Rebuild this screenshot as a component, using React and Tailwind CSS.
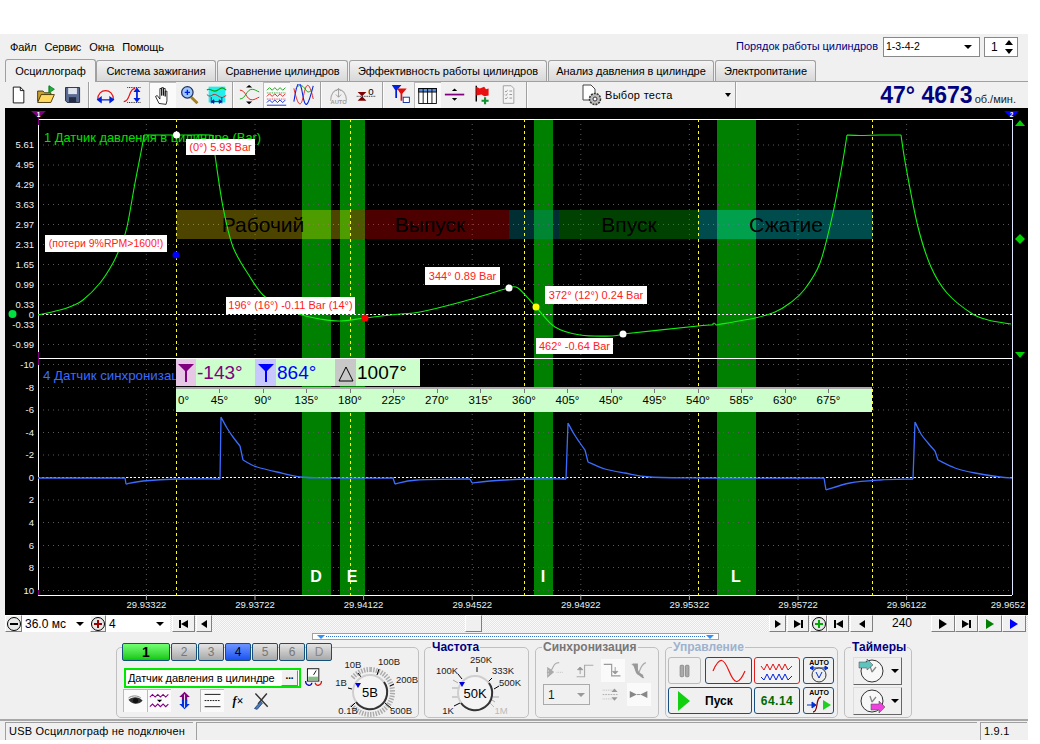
import React from 'react';

const F = { fontFamily: '"Liberation Sans", Arial, sans-serif' };

function smooth(str) {
  return str.split('|').map(seg => {
    const p = seg.trim().split(/\s+/).map(s => s.split(',').map(Number));
    let d = `M${p[0][0]} ${p[0][1]}`;
    for (let i = 0; i < p.length - 1; i++) {
      const a = p[Math.max(0, i - 1)], b = p[i], c = p[i + 1], e = p[Math.min(p.length - 1, i + 2)];
      d += `C${(b[0] + (c[0] - a[0]) / 6).toFixed(1)} ${(b[1] + (c[1] - a[1]) / 6).toFixed(1)} ${(c[0] - (e[0] - b[0]) / 6).toFixed(1)} ${(c[1] - (e[1] - b[1]) / 6).toFixed(1)} ${c[0]} ${c[1]}`;
    }
    return d;
  }).join(' ');
}

const pressure = smooth("38,315 60,310 72,306 83,300 100,283 113,263 121,245 127,227 135,183 142,147 144,135 | 144,135 180,135 210,135 213,137 | 213,137 215,155 223,207 233,247 250,277 263,295 280,306 302,315 320,319 340,321 365,318 400,314 420,312 461,302 508,288 | 508,288 518,288 536,307 555,327 580,335 612,336 623,334 | 623,334 698,326 712,325 | 712,325 714,323 716,325 | 716,325 755,318 775,312 790,303 804,290 820,263 833,213 843,160 847,135 | 847,135 860,135.5 880,135 901,135 | 901,135 906,167 918,227 931,267 947,293 971,313 988,320 1011,324");
const sync = smooth("38,478 125,478 | 125,478 126,484 | 126,484 143,481 177,479 220,479 | 220,479 221,417 | 221,417 227,428 233,437 240,446 | 240,446 243,460 | 243,460 250,464 257,467 277,472 300,477 330,478 393,478 | 393,478 395,484 | 395,484 417,480 470,479 | 470,479 472,483 | 472,483 490,481 530,479 566,479 | 566,479 568,423 | 568,423 574,434 580,443 585,450 | 585,450 588,462 | 588,462 605,469 625,473 650,477 700,478 824,478 | 824,478 826,490 | 826,490 850,483 880,480 913,479 | 913,479 915,422 | 915,422 921,434 928,443 935,451 | 935,451 938,460 | 938,460 955,468 975,473 1000,477 1012,478");
const y1 = [['5.61',144.5],['4.95',164.5],['4.29',184.5],['3.63',204],['2.97',224],['2.31',244],['1.65',264],['0.99',284],['0.33',304],['0',314],['-0.33',324],['-0.99',344]];
const y2 = [['-10',364],['-8',387],['-6',409.5],['-4',432],['-2',454.5],['0',477],['2',499.5],['4',522],['6',545],['8',567],['10',590]];
const xs = [[146.4,'29.93322'],[255,'29.93722'],[363.6,'29.94122'],[472.2,'29.94522'],[580.8,'29.94922'],[689.4,'29.95322'],[798,'29.95722'],[906.6,'29.96122'],[1008,'29.9652']];
const bands = [[302,29,'D',316],[340,25,'E',352],[534,19,'I',543],[717,39,'L',736]];
const degs = [45,90,135,180,225,270,315,360,405,450,495,540,585,630,675];
const tags = [
  ['left-[181px] top-[31px] w-[69px] h-[16px] text-[11px]','(0°) 5.93 Bar'],
  ['left-[40px] top-[127px] w-[122px] h-[17px] text-[10.5px]','(потери 9%RPM>1600!)'],
  ['left-[221px] top-[189px] w-[129px] h-[17px] text-[11px]','196° (16°) -0.11 Bar (14°)'],
  ['left-[420px] top-[159px] w-[75px] h-[18px] text-[11px]','344° 0.89 Bar'],
  ['left-[540px] top-[178px] w-[102px] h-[18px] text-[11px]','372° (12°) 0.24 Bar'],
  ['left-[531px] top-[230px] w-[77px] h-[16px] text-[11px]','462° -0.64 Bar'],
];

function Chart() {
  return (
    <div className="relative ml-[5px] w-[1023px] h-[507px] bg-black overflow-hidden" style={F}>
      <svg width="1023" height="507" viewBox="5 108 1023 507" className="block">
        {bands.map(b => <rect key={b[2]} x={b[0]} y="119" width={b[1]} height="476" fill="#008000" />)}
        {y1.concat(y2).map((t, i) => <line key={i} x1="38" x2="1012" y1={t[1]+0.5} y2={t[1]+0.5} stroke="#5a5a5a" strokeDasharray="1 4" />)}
        {xs.slice(0,8).map(t => <line key={t[1]} x1={t[0]} x2={t[0]} y1="119" y2="595" stroke="#5a5a5a" strokeDasharray="1 4" />)}
        <rect x="176.5" y="210" width="173.5" height="29" fill="#ffe000" fillOpacity=".3" />
        <rect x="350" y="210" width="159" height="29" fill="#ff0000" fillOpacity=".3" />
        <rect x="509" y="210" width="50" height="29" fill="#0090a0" fillOpacity=".32" />
        <rect x="559" y="210" width="139.5" height="29" fill="#00a000" fillOpacity=".4" />
        <rect x="698.5" y="210" width="174" height="29" fill="#00e0e0" fillOpacity=".34" />
        {[176.5,350.5,524.5,698.5,872.5].map(x => <line key={x} x1={x} x2={x} y1="119" y2="595" stroke="#ffff00" strokeDasharray="3 3" />)}
        <line x1="38" x2="1012" y1="314.5" y2="314.5" stroke="#fff" strokeDasharray="2 2" />
        <line x1="38" x2="1012" y1="477.5" y2="477.5" stroke="#fff" strokeDasharray="2 2" />
        <line x1="38" x2="1012" y1="119.5" y2="119.5" stroke="#fff" />
        <line x1="38" x2="1012" y1="358.5" y2="358.5" stroke="#fff" />
        <line x1="38" x2="1012" y1="595.5" y2="595.5" stroke="#fff" />
        <line x1="38.5" x2="38.5" y1="119" y2="595" stroke="#fff" />
        <line x1="1012.5" x2="1012.5" y1="119" y2="595" stroke="#dfe6ff" />
        <line x1="38.5" x2="38.5" y1="116" y2="125" stroke="#800080" />
        <line x1="38.5" x2="38.5" y1="352" y2="365" stroke="#800080" />
        <line x1="38.5" x2="38.5" y1="590" y2="595" stroke="#800080" />
        {xs.slice(0,8).map(t => <line key={t[1]} x1={t[0]} x2={t[0]} y1="595" y2="600" stroke="#aaa" />)}
        <text x="44" y="141.5" fill="#00e000" fontSize="12.9">1 Датчик давления в цилиндре (Bar)</text>
        <text x="43" y="380" fill="#3a6cff" fontSize="13.3">4 Датчик синхронизации</text>
        {[['Рабочий',263],['Выпуск',430],['Впуск',629],['Сжатие',786]].map(t => <text key={t[0]} x={t[1]} y="232" textAnchor="middle" fontSize="21" fill="#000">{t[0]}</text>)}
        <path d={pressure} fill="none" stroke="#10f010" strokeWidth="1.1" />
        <path d={sync} fill="none" stroke="#3a6cff" strokeWidth="1.3" />
        {y1.concat(y2).map((t, i) => <text key={i} x="34" y={t[1]+3.5} textAnchor="end" fontSize="9.5" fill="#f0f0f0">{t[0]}</text>)}
        {xs.map(t => <text key={t[1]} x={t[0]} y="608" textAnchor="middle" fontSize="9.5" fill="#e0f2f4">{t[1]}</text>)}
        {bands.map(b => <text key={b[2]} x={b[3]} y="582" textAnchor="middle" fontSize="16" fontWeight="700" fill="#fff">{b[2]}</text>)}
        <polygon points="31,111 46,111 38.5,118" fill="#800080" />
        <text x="38.5" y="116.5" textAnchor="middle" fontSize="6.5" fontWeight="700" fill="#fff">1</text>
        <polygon points="1004,111 1019,111 1011.5,118" fill="#0000ff" />
        <text x="1011.5" y="116.5" textAnchor="middle" fontSize="6.5" fontWeight="700" fill="#fff">2</text>
        <polygon points="1020,120 1025,126 1015,126" fill="#00d000" />
        <polygon points="1020,234 1025,239 1020,244 1015,239" fill="#00d000" />
        <polygon points="1020,358 1025,352 1015,352" fill="#00d000" />
        <circle cx="176.5" cy="135" r="3.5" fill="#fff" />
        <circle cx="176" cy="255" r="3.5" fill="#0000ff" />
        <circle cx="12.5" cy="314" r="4" fill="#00e040" />
        <circle cx="365" cy="318" r="3.5" fill="#ff0000" />
        <circle cx="509" cy="288" r="3.5" fill="#fff" />
        <circle cx="536" cy="307" r="3.5" fill="#ffff00" />
        <circle cx="623" cy="334" r="3.5" fill="#fff" />
      </svg>
      {tags.map(t => (
        <div key={t[1]} className={"absolute flex items-center justify-center bg-white text-[#ff2020] whitespace-nowrap " + t[0]}>{t[1]}</div>
      ))}
      <div className="absolute left-[171px] top-[251px] flex w-[244px] h-[27px] items-center bg-[#ccffcc] text-[19px] leading-none">
        <div className="w-[20px] h-[27px] bg-[#e6c8e6] flex items-center justify-center">
          <svg width="18" height="22" viewBox="0 0 18 22"><polygon points="1,2 17,2 10,9 10,20 8,20 8,9" fill="#800080" /></svg>
        </div>
        <div className="w-[59px] pl-[1px] text-[#800080]">-143°</div>
        <div className="w-[21px] h-[27px] bg-[#c8c8ff] flex items-center justify-center">
          <svg width="18" height="22" viewBox="0 0 18 22"><polygon points="1,2 17,2 10,9 10,20 8,20 8,9" fill="#0000ff" /></svg>
        </div>
        <div className="w-[59px] pl-[1px] text-[#0000ff]">864°</div>
        <div className="w-[21px] h-[27px] bg-[#c8c8c8] flex items-center justify-center">
          <svg width="18" height="22" viewBox="0 0 18 22"><polygon points="9,5 16,19 2,19" fill="none" stroke="#000" /></svg>
        </div>
        <div className="pl-[1px] text-black">1007°</div>
      </div>
      <div className="absolute left-[171px] top-[279px] flex w-[696px] h-[25px] bg-[#ccffcc] border-t-2 border-[#aaaaaa] text-[11.5px] leading-[14px] text-black">
        <div className="w-[21.75px] pl-[2px] pt-[4px]">0°</div>
        {degs.map(d => (
          <div key={d} className="w-[43.5px] text-center">
            <div className="w-px h-[4px] bg-[#777] mx-auto" />
            <div>{d}°</div>
          </div>
        ))}
      </div>
    </div>
  );
}

const S = ({ children, w = 24, h = 24 }) => {
  const k = w === 24 ? 0.88 : 1;
  return <svg width={w * k} height={h * k} viewBox={`0 0 ${w} ${h}`} fontFamily="Liberation Sans">{children}</svg>;
};

const tb = {
  doc: <S><path d="M6 3.5h8l4 4v14H6z" fill="#fff" stroke="#000" /><path d="M14 3.5v4h4" fill="none" stroke="#000" /></S>,
  open: <S><path d="M3 20V8h6l2 2h7v3" fill="#c8a030" stroke="#3a3000" /><path d="M3 21l4-9h15l-4 9z" fill="#ffd860" stroke="#3a3000" /><path d="M16 2v8M16 2l6 4-6 4z" fill="#20b040" stroke="#108020" /></S>,
  save: <S><path d="M4 4h16v17H6l-2-2z" fill="#5a6a90" stroke="#223" /><rect x="7" y="4.5" width="10" height="7" fill="#dfe4ee" /><rect x="8" y="15" width="8" height="6" fill="#222a44" /></S>,
  a1: <S><path d="M3 18C3 4 21 4 21 18" fill="none" stroke="#ee1010" strokeWidth="1.4" /><path d="M3 18h18M3 18l4-3v6zM21 18l-4-3v6z" fill="#0020e0" stroke="#0020e0" strokeWidth="1.3" /></S>,
  a2: <S><path d="M2 20c8 0 5-15 13-15" fill="none" stroke="#ee1010" strokeWidth="1.3" /><path d="M6 4h16M6 21h16" stroke="#000" strokeDasharray="1 1" /><path d="M17 6v13" stroke="#0020e0" strokeWidth="2" /><path d="M13 9l4-5 4 5zM13 16l4 5 4-5z" fill="#0020e0" /></S>,
  hand: <S><path d="M8 21l-4-8 2-1 3 4V4h2v8-9h2v9-8h2v9-6h2v11l-1 4z" fill="#fff" stroke="#000" strokeWidth=".9" strokeLinejoin="round" /></S>,
  zoom: <S><path d="M14 15l7 7" stroke="#a08020" strokeWidth="3.2" /><circle cx="9.5" cy="9.5" r="6.5" fill="#9cc8ff" stroke="#203060" strokeWidth="1.4" /><path d="M6.5 9.5h6M9.5 6.5v6" stroke="#0020e0" strokeWidth="1.6" /></S>,
  cyan: <S><rect x="3" y="3" width="19" height="18" fill="#22eeee" /><path d="M1 7c4-4 6 4 12 0s6-3 10 0" fill="none" stroke="#00a000" strokeWidth="1.3" /><path d="M1 12c5 5 6-3 12 1s6 2 10 0" fill="none" stroke="#e01010" /><path d="M6 20h12M6 20l3-2v4zM18 20l-3-2v4zM6 15v7M18 15v7" stroke="#0020a0" /></S>,
  cross: <S><path d="M1 7c7 0 7 11 14 11 3 0 5-2 8-3" fill="none" stroke="#e01010" /><path d="M1 17c7 0 7-11 14-11 3 0 5 2 8 3" fill="none" stroke="#00a000" /><path d="M8 4h7l-3.500-3zM8 20h7l-3.500 3z" fill="#000" /></S>,
  waves: <S><path d="M1 6l3-3 3 3 3-3 3 3 3-3 3 3 3-3" fill="none" stroke="#00a000" /><path d="M1 9h22" stroke="#00a000" strokeDasharray="1 1" /><path d="M1 13l3-3 3 3 3-3 3 3 3-3 3 3 3-3" fill="none" stroke="#e01010" /><path d="M1 16h22" stroke="#e01010" strokeDasharray="1 1" /><path d="M1 20l3-3 3 3 3-3 3 3 3-3 3 3 3-3M1 23h22" fill="none" stroke="#0020e0" /></S>,
  sine: <S><path d="M1 20C5 -6 8 -6 11 12s6 14 12-10" fill="none" stroke="#0020e0" strokeWidth="1.2" /><path d="M1 5c5 22 8 22 11 8s6-18 11 4" fill="none" stroke="#e01010" /><path d="M3 5c4-5 8-4 11 1s5 3 8 0" fill="none" stroke="#00a000" /></S>,
  auto: <S><path d="M3 19C3 2 21 2 21 19" fill="none" stroke="#aaa" strokeWidth="1.2" /><path d="M12 5v10M9 8l3-3 3 3M9 12l3 3 3-3" fill="none" stroke="#999" /><text x="12" y="23" textAnchor="middle" fontSize="6.5" fontWeight="700" fill="#999">AUTO</text></S>,
  zero: <S><path d="M3 9h10l-5 5zM3 19h10l-5-5z" fill="#800000" /><path d="M2 14h21" stroke="#000" strokeDasharray="1 1" /><text x="18" y="12" textAnchor="middle" fontSize="11" fill="#000">0</text></S>,
  funnel: <S><polygon points="2,1 13,1 8,7 8,16 6,16 6,7" fill="#0020e0" /><polygon points="8,5 19,5 14,11 14,19 12,19 12,11" fill="#e01010" /><rect x="15" y="15" width="7" height="6" fill="#fff" stroke="#0020a0" /></S>,
  table: <S><rect x="2" y="4" width="20" height="17" fill="#fff" stroke="#000" /><rect x="2" y="4" width="20" height="4" fill="#5a8ee0" stroke="#000" /><path d="M7 4v17M12 4v17M17 4v17" stroke="#000" /></S>,
  split: <S><path d="M1 12h22" stroke="#800080" strokeWidth="2" /><path d="M9 8h6l-3-3zM9 16h6l-3 3z" fill="#000" /></S>,
  flag: <S><path d="M6 2v18" stroke="#000" strokeWidth="1.6" /><path d="M6 3l4 2 5-2 2 3 3-1v8l-5 1-3-2-6 1z" fill="#e81010" /><path d="M12 19h8M16 15v8" stroke="#109030" strokeWidth="2.4" /></S>,
  check: <S><path d="M6 2h9l3 3v17H6z" fill="#f4f4f4" stroke="#999" /><path d="M8 8l1 1 2-2M8 12l1 1 2-2M8 16l1 1 2-2M13 8h3M13 12h3M13 16h3" fill="none" stroke="#888" /></S>,
};

const TB = ({ i, on }) => (
  <div className={"w-[27px] h-[26px] flex items-center justify-center shrink-0 " + (on ? "bg-[#fafafa] border-t border-l border-[#bbb]" : "")}>{tb[i]}</div>
);
const Sep = ({ w }) => (
  <div className={"flex justify-center shrink-0 h-[26px] " + w}><div className="w-[2px] h-full border-l border-[#a0a0a0] bg-white/70" /></div>
);

function Toolbar() {
  return (
    <div className="ml-[5px] w-[1023px] h-[27px] border-t border-[#a0a0a0] flex items-center text-[11px] text-black">
      <TB i="doc" /><TB i="open" /><TB i="save" /><Sep w="w-[6px]" />
      <TB i="a1" /><TB i="a2" /><div className="w-[3px]" />
      <TB i="hand" on /><TB i="zoom" /><TB i="cyan" /><Sep w="w-[6px]" />
      <TB i="cross" /><TB i="waves" on /><TB i="sine" /><Sep w="w-[8px]" />
      <TB i="auto" /><TB i="zero" /><Sep w="w-[8px]" />
      <TB i="funnel" /><TB i="table" on /><TB i="split" /><TB i="flag" /><TB i="check" /><Sep w="w-[10px]" />
      <div className="w-[200px] flex items-center shrink-0 pl-[48px]">
        <svg width="24" height="24" viewBox="0 0 24 24" className="shrink-0"><path d="M3 2h8l4 4v11H3z" fill="#fff" stroke="#444" /><circle cx="15" cy="16" r="5.500" fill="#bbb" stroke="#333" strokeWidth="1.5" strokeDasharray="2 1" /><circle cx="15" cy="16" r="2" fill="#fff" stroke="#333" /></svg>
        <span className="ml-[1px] text-[11px] tracking-[0.3px]">Выбор теста</span>
        <svg width="8" height="4" className="ml-[51px] shrink-0"><polygon points="1,0 7,0 4,4" fill="#000" /></svg>
      </div>
      <Sep w="w-[8px]" />
      <div className="flex-1 flex items-baseline justify-end pr-[12px]">
        <span className="text-[23px] leading-none font-bold text-[#000080]">47° 4673</span>
        <span className="text-[11px] leading-none text-[#222] ml-[2px]">об./мин.</span>
      </div>
    </div>
  );
}

const tabs = [['w-[120px]','Система зажигания'],['w-[131px]','Сравнение цилиндров'],['w-[198px]','Эффективность работы цилиндров'],['w-[166px]','Анализ давления в цилиндре'],['w-[101px]','Электропитание']];

const Blt = ({ w, children }) => (
  <div className={"h-[17px] flex items-center justify-center shrink-0 bg-[#f0f0f0] border-t border-l border-t-white border-l-white border-r border-b border-r-[#808080] border-b-[#808080] " + w}>{children}</div>
);
const Tri = ({ d }) => d === 'l'
  ? <svg width="8" height="8"><polygon points="7,0 7,8 1,4" fill="#000" /></svg>
  : <svg width="8" height="8"><polygon points="1,0 1,8 7,4" fill="#000" /></svg>;
const TriC = ({ c }) => <svg width="10" height="10"><polygon points="1,0 1,10 9,5" fill={c} /></svg>;
const Bar = ({ r }) => r
  ? <svg width="11" height="8"><polygon points="1,0 1,8 8,4" fill="#000" /><rect x="8" y="0" width="2" height="8" fill="#000" /></svg>
  : <svg width="11" height="8"><rect x="1" y="0" width="2" height="8" fill="#000" /><polygon points="10,0 10,8 3,4" fill="#000" /></svg>;
const RB = ({ c, s }) => (
  <div className="w-[14px] h-[14px] rounded-full border border-black bg-[#e8e8e8] flex items-center justify-center">
    <svg width="8" height="8"><path d={s === '+' ? "M0 4h8M4 0v8" : "M0 4h8"} stroke={c} strokeWidth="2" /></svg>
  </div>
);
const DD = () => <svg width="8" height="4" className="shrink-0"><polygon points="0,0 8,0 4,4" fill="#000" /></svg>;

function Nav() {
  return (
    <div className="ml-[5px] w-[1023px] h-[17px] flex items-center text-[12px] bg-[repeating-conic-gradient(#e4e4e4_0_25%,#fafafa_0_50%)] bg-[length:2px_2px]">
      <Blt w="w-[17px]"><RB c="#000" s="-" /></Blt>
      <div className="w-[68px] h-[17px] bg-white flex items-center justify-between px-[3px] pr-[6px]"><span>36.0 мс</span><DD /></div>
      <Blt w="w-[16px]"><RB c="#900" s="+" /></Blt>
      <div className="w-[64px] h-[17px] bg-white flex items-center justify-between px-[3px] pr-[6px]"><span>4</span><DD /></div>
      <div className="w-[2px]" />
      <Blt w="w-[23px]"><Bar /></Blt><div className="w-px" />
      <Blt w="w-[16px]"><Tri d="l" /></Blt>
      <div className="w-[253px]" />
      <Blt w="w-[17px]"><span /></Blt>
      <div className="w-[287px]" />
      <Blt w="w-[17px]"><Tri /></Blt><div className="w-px" />
      <Blt w="w-[22px]"><Bar r /></Blt><div className="w-px" />
      <Blt w="w-[17px]"><RB c="#0a0" s="+" /></Blt>
      <Blt w="w-[22px]"><Bar /></Blt><div className="w-px" />
      <Blt w="w-[23px]"><Tri d="l" /></Blt>
      <div className="w-[58px] h-[17px] bg-[#f0f0f0] text-center leading-[17px]">240</div>
      <Blt w="w-[24px]"><TriC c="#000" /></Blt>
      <Blt w="w-[23px]"><Bar r /></Blt>
      <Blt w="w-[24px]"><TriC c="#008000" /></Blt>
      <Blt w="w-[24px]"><TriC c="#0000ff" /></Blt>
    </div>
  );
}

function Knob({ vb, cx, cy, labels, hatch, text, ptr, rest }) {
  const ticks = [];
  if (hatch) for (let a = 0; a < 360; a += 7) {
    const r = a * Math.PI / 180;
    if (a > 55 && a < 125) continue;
    ticks.push(<line key={a} x1={cx + 20 * Math.sin(r + Math.PI)} y1={cy + 20 * Math.cos(r + Math.PI)} x2={cx + 25 * Math.sin(r + Math.PI)} y2={cy + 25 * Math.cos(r + Math.PI)} stroke="#aaa" strokeWidth="1.4" />);
  }
  const [vx, vy, w, h] = vb;
  return (
    <svg width={w} height={h} viewBox={vb.join(' ')} className="shrink-0" fontFamily="Liberation Sans">
      {ticks}
      {rest}
      {labels.map(l => <g key={l[0]}><line x1={l[3]} y1={l[4]} x2={l[5]} y2={l[6]} stroke={l[7] || '#000'} /><text x={l[1]} y={l[2]} textAnchor="middle" fontSize="9.5" fill={l[7] || '#222'}>{l[0]}</text></g>)}
      <circle cx={cx} cy={cy} r="17" fill="#f4f4f4" stroke="#cfcfcf" strokeWidth="2" />
      <path d={`M${cx + 14} ${cy - 10}A17 17 0 0 1 ${cx - 14} ${cy + 10}`} fill="none" stroke="#333" strokeWidth="2" />
      <polygon points={`${ptr[0] - 3},${ptr[1] - 2} ${ptr[0] + 3},${ptr[1] - 2} ${ptr[0]},${ptr[1] + 3}`} fill="#0000e0" />
      <text x={cx} y={cy + 5} textAnchor="middle" fontSize="13" fill="#000">{text}</text>
    </svg>
  );
}

const Panel = ({ w, children, cls = '' }) => (
  <div className={"h-[71px] rounded-[5px] border border-[#c0c0c0] shrink-0 " + w + " " + cls}>{children}</div>
);
const Title = ({ c, children, w }) => (
  <div className={"-mt-[8px] ml-[6px] px-[1px] h-[14px] w-fit bg-[#f0f0f0] text-[12px] font-bold leading-[14px] " + c}>{children}</div>
);

const chs = [['w-[48px]','1','from-[#70ff70] to-[#00c800] text-black font-bold text-[14px]'],['w-[26px]','2','from-[#e4e4e4] to-[#a8a8a8] text-[#777] text-[12px]'],['w-[26px]','3','from-[#e4e4e4] to-[#a8a8a8] text-[#777] text-[12px]'],['w-[26px]','4','from-[#6d94ff] to-[#1c50f0] text-black text-[12px]'],['w-[26px]','5','from-[#e4e4e4] to-[#a8a8a8] text-[#777] text-[12px]'],['w-[26px]','6','from-[#e4e4e4] to-[#a8a8a8] text-[#777] text-[12px]'],['w-[26px]','D','from-[#e4e4e4] to-[#a8a8a8] text-[#888] text-[12px]']];

const I20 = ({ children, on }) => (
  <div className={"w-[24px] h-[23px] flex items-center justify-center shrink-0 " + (on ? "bg-[#fafafa] border-t border-l border-[#bbb]" : "")}>{children}</div>
);

function Channel() {
  return (
    <Panel w="w-[303px]" cls="flex items-start">
      <div className="w-[210px] ml-[5px] -mt-[5px] shrink-0">
        <div className="flex gap-[1px] h-[18px]">
          {chs.map(c => <div key={c[1]} className={"h-[18px] rounded-[2px] border border-[#14507a] bg-linear-to-b flex items-center justify-center leading-none " + c[0] + " " + c[2]}>{c[1]}</div>)}
        </div>
        <div className="flex items-center mt-[7px] ml-[2px] h-[20px]">
          <div className="w-[177px] h-[20px] bg-white border-2 border-[#00e800] flex items-center justify-between pl-[2px] pr-[1px] text-[11px] tracking-[-0.08px] whitespace-nowrap shrink-0">
            <span>Датчик давления в цилиндре</span>
            <div className="w-[17px] h-[16px] bg-[#f0f0f0] border border-t-white border-l-white border-r-[#808080] border-b-[#808080] text-[10px] leading-[10px] text-center font-bold shrink-0">...</div>
          </div>
          <div className="ml-[2px] shrink-0">
            <S><rect x="5" y="2" width="13" height="14" fill="#fff" stroke="#000" /><rect x="6" y="11" width="11" height="4" fill="#80c080" /><path d="M12 9l3-5" stroke="#000" /><path d="M3 16c0 6 7 6 7 2" fill="none" stroke="#0000c0" strokeWidth="1.5" /><path d="M21 16c0 6-7 6-7 2" fill="none" stroke="#e01010" strokeWidth="1.5" /></S>
          </div>
        </div>
        <div className="flex items-center mt-[1px] ml-[1px]">
          <I20 on><S><path d="M4 11c4-4 12-4 16 1-4 5-12 5-16-1z" fill="#333" /><circle cx="12" cy="12" r="3" fill="#111" /><path d="M4 9c4-3 10-3 14 0" fill="none" stroke="#777" /></S></I20>
          <I20 on><S><path d="M1 8l3-3 3 3 3-3 3 3 3-3 3 3 3-3" fill="none" stroke="#800080" strokeWidth="1.2" /><path d="M1 19l3-3 3 3 3-3 3 3 3-3 3 3 3-3" fill="none" stroke="#800080" strokeWidth="1.2" /><path d="M9 11h6l-3 3z" fill="#000" /></S></I20>
          <div className="w-[2px]" />
          <I20><S><path d="M12 2l6 6h-3v5H9V8H6z" fill="#800080" /><path d="M12 22l6-6h-3v-5H9v5H6z" fill="#0030e0" /><path d="M12 5v15" stroke="#fff" /></S></I20>
          <div className="w-[3px]" />
          <I20 on><S><path d="M3 5h18M3 19h18" stroke="#000" /><path d="M3 12h18" stroke="#000" strokeDasharray="2 1" /></S></I20>
          <div className="w-[2px]" />
          <I20><span className="text-[12px] font-bold italic text-black" style={{ fontFamily: '"Liberation Serif", serif' }}>f×</span></I20>
          <I20><S><path d="M5 4l14 15M18 4L8 16" stroke="#333" strokeWidth="1.6" /><path d="M4 21l7-8 2 2-6 7z" fill="#4a78b8" stroke="#204a80" /></S></I20>
        </div>
      </div>
      <Knob vb={[332, 648, 86, 69]} cx={370} cy={692} hatch text="5В" ptr={[358, 685]} labels={[
        ['10В',353,668,358,673,361,677],['100В',389,665,379,669,377,675],['1В',341,686,348,688,352,689],['200В',407,683,390,686,394,684],['0.1В',348,714,355,703,351,707],['500В',401,714,385,703,391,708],
      ]} />
    </Panel>
  );
}

function Freq() {
  return (
    <Panel w="w-[105px]">
      <Title c="text-[#000080]">Частота</Title>
      <Knob vb={[425, 654, 103, 63]} cx={475} cy={693} text="50K" ptr={[462, 684]} labels={[
        ['250K',481,663,477,667,477,672],['100K',447,674,458,674,462,679],['333K',503,674,492,678,488,682],['500K',510,686,499,686,494,689],['1K',448,714,454,706,460,703],['1M',501,714,490,703,494,707,'#bbb'],
      ]} rest={<path d="M452 688h6M452 697h6M493 697h6M453 680l5 3M495 702l-3-2" stroke="#aaa" />} />
    </Panel>
  );
}

const G = ({ children, on }) => (
  <div className={"w-[24px] h-[23px] flex items-center justify-center shrink-0 " + (on ? "bg-[#fafafa]" : "")}>{children}</div>
);

function SyncP() {
  return (
    <Panel w="w-[124px]">
      <Title c="text-[#777]">Синхронизация</Title>
      <div className="grid grid-cols-4 w-[112px] ml-[7px] mt-[5px] justify-items-center">
        <G><S><path d="M1 14h4l2-4c2-4 3-7 8-7M2 9l6 5-6 5z" fill="none" stroke="#aaa" strokeWidth="1.300" /><polygon points="3,9 9,13.500 3,18" fill="#aaa" /><path d="M12 14h8" stroke="#bbb" strokeDasharray="1 1" /></S></G>
        <G><S><path d="M3 19h9V6h10" fill="none" stroke="#aaa" strokeWidth="1.3" /><path d="M7 16V8M4 11l3-3 3 3z" stroke="#999" fill="#999" /></S></G>
        <G on><S><path d="M2 5h9v13h10" fill="none" stroke="#999" strokeWidth="1.3" /><path d="M15 8v7M12 13l3 3 3-3z" stroke="#999" fill="#999" /></S></G>
        <G><S><path d="M2 5c8 0 6 15 14 15M18 3c-6 2-6 8-9 14" fill="none" stroke="#aaa" strokeWidth="1.3" /><path d="M3 4h6v9l6 4v4l-8-6z" fill="#999" /></S></G>
      </div>
      <div className="flex items-center ml-[7px] mt-[1px]">
        <div className="w-[47px] h-[21px] border border-[#aaa] flex items-center justify-between px-[4px] text-[12px] text-[#222] shrink-0">
          <span>1</span>
          <svg width="8" height="4"><polygon points="0,0 8,0 4,4" fill="#999" /></svg>
        </div>
        <div className="w-[9px]" />
        <G><S><path d="M3 12h18" stroke="#aaa" strokeDasharray="2 1" /><path d="M3 7h14M3 17h14" stroke="#bbb" strokeDasharray="1 1" /><path d="M13 9h7l-3.500-4zM13 15h7l-3.500 4z" fill="#999" /></S></G>
        <div className="w-[4px]" />
        <G on><S><path d="M2 8l8 4-8 4zM22 8l-8 4 8 4z" fill="#888" /><path d="M10 12h4" stroke="#888" /></S></G>
      </div>
    </Panel>
  );
}

const AutoA = () => <S w={26} h={26}><text x="13" y="7" textAnchor="middle" fontSize="7" fontWeight="700">AUTO</text><path d="M4 10h18M4 10l3-2v4zM22 10l-3-2v4z" stroke="#0030d0" fill="#0030d0" /><circle cx="13" cy="17" r="7" fill="#eee" stroke="#333" /><path d="M10 14l3 6 3-6" fill="none" stroke="#0030d0" /></S>;
const AutoB = () => <S w={26} h={26}><text x="13" y="7" textAnchor="middle" fontSize="7" fontWeight="700">AUTO</text><path d="M7 24c6 0 2-15 8-15" fill="none" stroke="#800000" strokeWidth="1.3" /><path d="M1 17h8M6 14l4 3-4 3z" stroke="#0030d0" fill="#0030d0" /><polygon points="17,12 25,17 17,22" fill="#20d020" /></S>;
const CB = ({ w, cls, children }) => (
  <div className={"h-[27px] rounded-[3px] border flex items-center justify-center shrink-0 " + w + " " + (cls || "border-[#1a5080] bg-[#f0f0f0]")}>{children}</div>
);

function Ctrl() {
  return (
    <Panel w="w-[173px]">
      <Title c="text-[#9db2cf]">Управление</Title>
      <div className="flex ml-[2px] mt-[3px]">
        <CB w="w-[33px]" cls="border-[#bbb] bg-[#f0f0f0]"><S><rect x="7" y="6" width="4" height="13" rx="1" fill="#aaa" stroke="#888" /><rect x="13" y="6" width="4" height="13" rx="1" fill="#aaa" stroke="#888" /></S></CB>
        <div className="w-[4px]" />
        <CB w="w-[47px]"><svg width="34" height="24"><path d="M1 12C8 -4 12 0 17 12s9 16 16 0" fill="none" stroke="#ee1010" strokeWidth="1.2" /></svg></CB>
        <div className="w-[2px]" />
        <CB w="w-[46px]" cls="border-[#e02020] bg-[#f4f4f4]"><svg width="34" height="22"><path d="M1 6l3 4 3-6 3 6 3-6 3 6 3-6 3 6 3-6 3 6 4-4" fill="none" stroke="#e01010" /><path d="M1 17l3 3 3-6 3 6 3-6 3 6 3-6 3 6 3-6 3 6 4-4" fill="none" stroke="#0020e0" /></svg></CB>
        <div className="w-[3px]" />
        <CB w="w-[31px]"><AutoA /></CB>
      </div>
      <div className="flex ml-[2px] mt-[3px]">
        <CB w="w-[84px]"><div className="flex items-center w-full pl-[9px]"><svg width="12" height="20" className="shrink-0"><polygon points="0,0 12,10 0,20" fill="#10d010" /></svg><span className="ml-[15px] text-[12px] font-bold text-black">Пуск</span></div></CB>
        <div className="w-[2px]" />
        <CB w="w-[46px]"><span className="text-[12px] font-bold text-[#006a00] tracking-[0.5px]">64.14</span></CB>
        <div className="w-[3px]" />
        <CB w="w-[31px]"><AutoB /></CB>
      </div>
    </Panel>
  );
}

const Clock = ({ c, side }) => (
  <svg width="28" height="26" viewBox="0 0 28 26" className="shrink-0"><circle cx="14" cy="13" r="11" fill="#f8f8f8" stroke="#333" /><path d="M14 14l-2-6M14 14l4-5" stroke="#888" strokeWidth="1.300" />
    {side === 'l' ? <polygon points="1,4 9,4 9,1 15,7 9,12 9,10 1,10" fill={c} stroke="#444" strokeWidth=".5" /> : <polygon points="13,16 21,16 21,13 27,19 21,25 21,22 13,22" fill={c} stroke="#444" strokeWidth=".5" />}
  </svg>
);
function Timers() {
  return (
    <Panel w="w-[68px]">
      <Title c="text-[#000080]">Таймеры</Title>
      {[['#5fc4c0','l'],['#f040e0','r']].map((t, i) => (
        <div key={i} className={"ml-[8px] w-[49px] h-[28px] bg-[#f0f0f0] border border-t-[#ddd] border-l-[#ddd] border-r-[#666] border-b-[#666] rounded-[1px] flex items-center pl-[4px] " + (i ? "mt-[2px]" : "mt-[3px]")}>
          <Clock c={t[0]} side={t[1]} />
          <svg width="8" height="4" className="ml-[5px]"><polygon points="0,0 8,0 4,4" fill="#000" /></svg>
        </div>
      ))}
    </Panel>
  );
}

export default function App() {
  return (
    <div className="w-[1040px] h-[744px] bg-white pt-[34px] overflow-hidden" style={F}>
      <div className="w-[1028px] h-[706px] bg-[#f0f0f0] flex flex-col text-black">
        <div className="h-[24px] flex items-center text-[11px] pl-[10px] relative">
          <div className="flex gap-[8px] tracking-[-0.15px] mt-[3px]"><span>Файл</span><span>Сервис</span><span>Окна</span><span>Помощь</span></div>
          <div className="ml-auto flex items-center mr-[10px] mt-[1px]">
            <span className="text-[#000080] tracking-[-0.02px]">Порядок работы цилиндров</span>
            <div className="ml-[5px] w-[97px] h-[20px] bg-white border border-[#888] flex items-center justify-between pl-[2px] pr-[7px] text-[10.5px]"><span>1-3-4-2</span><DD /></div>
            <div className="ml-[4px] w-[34px] h-[20px] bg-white border border-[#888] flex items-center justify-between pl-[6px] pr-[4px] text-[12px]">
              <span>1</span>
              <svg width="8" height="14"><polygon points="0,5 8,5 4,0" fill="#000" /><polygon points="0,9 8,9 4,14" fill="#000" /></svg>
            </div>
          </div>
        </div>
        <div className="h-[23px] flex items-end pl-[5px] text-[11px] tracking-[-0.05px]">
          <div className="w-[91px] h-[23px] -mb-px z-10 bg-[#f0f0f0] border border-b-0 border-[#a0a0a0] rounded-t-[3px] flex items-center justify-center">Осциллограф</div>
          {tabs.map(t => <div key={t[1]} className={"h-[21px] mr-px bg-linear-to-b from-[#f4f4f4] to-[#d8d8d8] border border-b-0 border-[#a0a0a0] rounded-t-[3px] flex items-center justify-center shrink-0 " + t[0]}>{t[1]}</div>)}
        </div>
        <Toolbar />
        <Chart />
        <Nav />
        <div className="h-[7px] mt-px ml-[312px] w-[407px] bg-white border border-[#a0a0a0] flex items-center justify-between px-[4px]">
          <svg width="8" height="4" className="shrink-0"><polygon points="0,0 8,0 4,4" fill="#3090ff" /></svg>
          <div className="flex-1 mx-[1px] border-t border-dotted border-[#3070d0]" />
          <svg width="8" height="4" className="shrink-0"><polygon points="0,0 8,0 4,4" fill="#3090ff" /></svg>
        </div>
        <div className="h-[81px] pt-[7px] pl-[116px] flex border-b-2 border-[#a8a8a8]">
          <Channel />
          <div className="w-[5px]" />
          <Freq />
          <div className="w-[6px]" />
          <SyncP />
          <div className="w-[6px]" />
          <Ctrl />
          <div className="w-[6px]" />
          <Timers />
        </div>
        <div className="h-[18px] mt-px flex text-[11px] tracking-[0.2px]">
          <div className="ml-[5px] w-[188px] border-t border-l border-[#a0a0a0] pl-[3px] leading-[17px] bg-[#f0f0f0]">USB Осциллограф не подключен</div>
          <div className="ml-[3px] w-[781px] border-t border-l border-[#a0a0a0]" />
          <div className="ml-[3px] w-[47px] border-t border-l border-[#a0a0a0] pl-[3px] leading-[17px]">1.9.1</div>
        </div>
      </div>
    </div>
  );
}
